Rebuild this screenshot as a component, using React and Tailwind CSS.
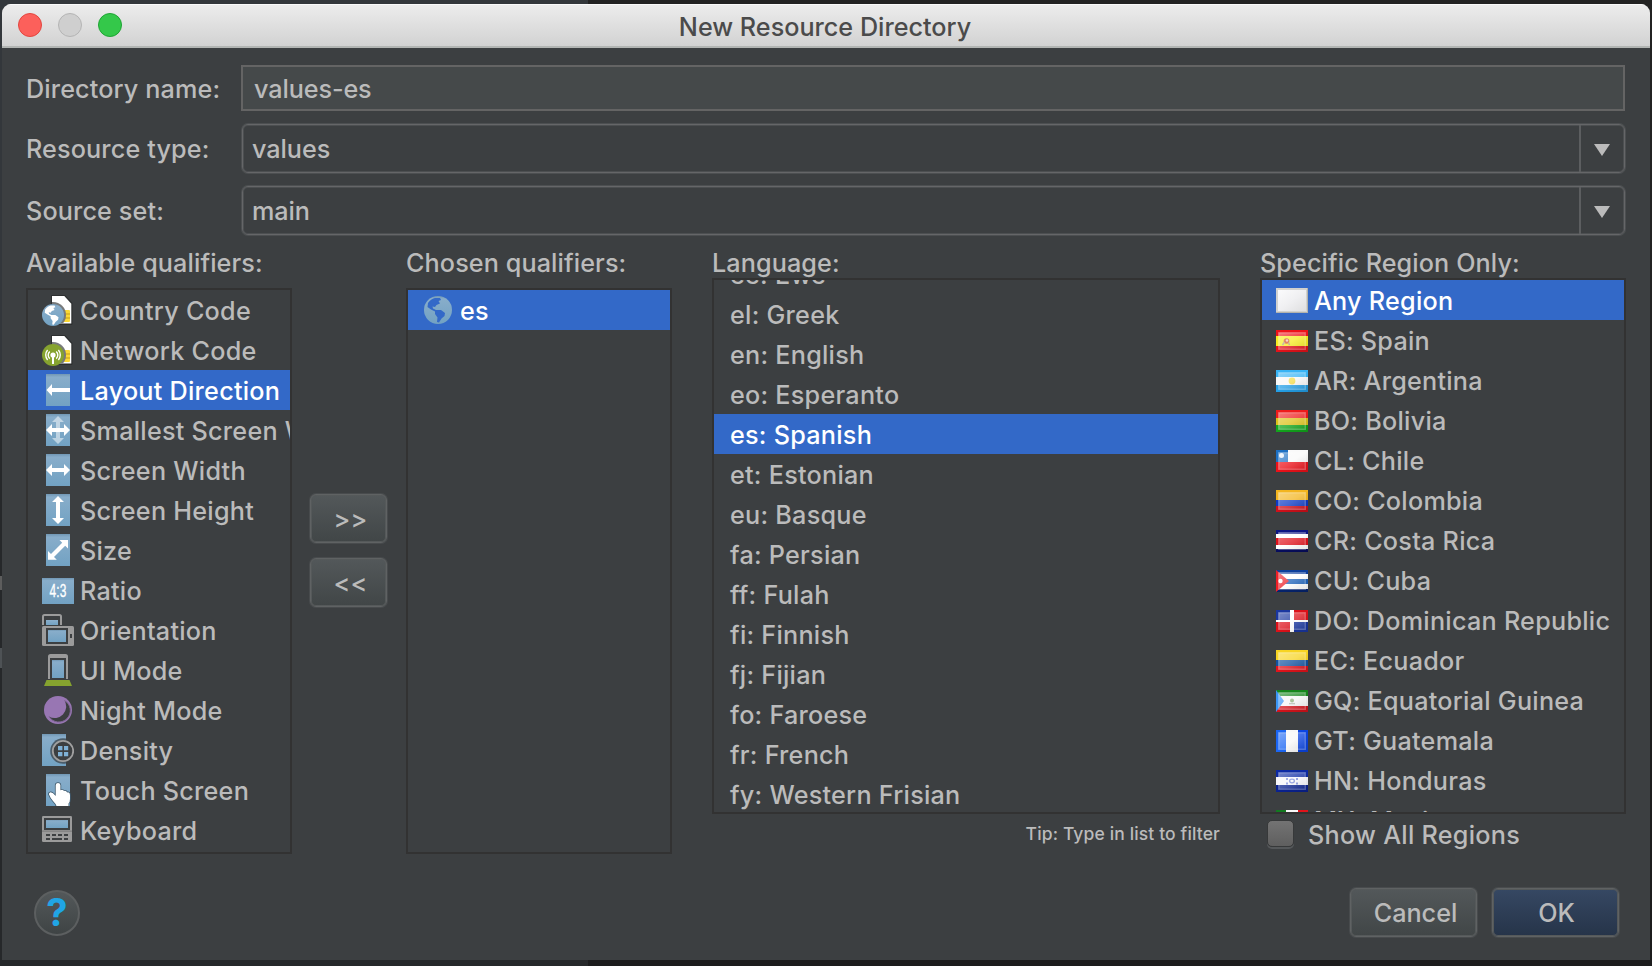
import React from "react";

const BLUE = "url(#screenBlue)";

function Globe({ cx, cy, r, land }) {
  return (
    <g transform={`translate(${cx - r} ${cy - r}) scale(${r / 14})`}>
      <circle cx="14" cy="14" r="14" fill={BLUE} />
      <path
        fill={land}
        d="M4 7 C6 4 9 2.5 11 2 L16 2 L17 4 L14.5 5 L16 7.5 L12.5 9 L11 11 L8.5 10.5 L9 12.5 L12 14 L17 14 L21 17 L20.5 20 L17.5 22.5 L15 26.5 L13 26 L13.5 21.5 L11 18 L11 15.5 L7 13.5 L3.5 11 Z"
      />
    </g>
  );
}

function SimCard() {
  return (
    <>
      <path d="M10 2 H22.5 L29.5 9.5 V30 H10 Z" fill="#fff" stroke="#2d2f30" strokeWidth="2" strokeLinejoin="round" />
      <path d="M10 2 H22.3 L29.3 9.7 V29.5 H10 Z" fill="#fff" />
      <rect x="18" y="16" width="10" height="12" rx="1" fill="#fbd834" />
      <path d="M22 20 H28 M22 24 H28" stroke="#c39d1e" strokeWidth="1" />
      <circle cx="11" cy="21" r="13" fill="#77797a" clipPath="url(#cardClip)" />
    </>
  );
}

const Screen = () => <rect x="4" width="24" height="32" fill={BLUE} />;

const HArrow = () => (
  <path fill="#fff" d="M4 16 L10 10 V14 H22 V10 L28 16 L22 22 V18 H10 V22 Z" />
);

const VArrow = ({ opacity = 1 }) => (
  <path fill="#fff" fillOpacity={opacity} d="M16 2 L22 8 H18 V24 H22 L16 30 L10 24 H14 V8 H10 Z" />
);

const icons = {
  country: (
    <>
      <SimCard />
      <Globe cx={11} cy={21} r={11} land="#fff" />
    </>
  ),
  network: (
    <>
      <SimCard />
      <circle cx="11" cy="21" r="11" fill="#86a32f" />
      <circle cx="11" cy="21" r="2.6" fill="#fff" />
      <path d="M11 21 V30" stroke="#fff" strokeWidth="2" />
      <path
        d="M7.8 24.6 A4.8 4.8 0 0 1 7.8 17.4 M14.2 24.6 A4.8 4.8 0 0 0 14.2 17.4 M5.6 26 A7.6 7.6 0 0 1 5.6 16 M16.4 26 A7.6 7.6 0 0 0 16.4 16"
        fill="none"
        stroke="#fff"
        strokeWidth="1.4"
      />
    </>
  ),
  direction: (
    <>
      <Screen />
      <path fill="#fff" d="M4.5 16 L10 10 V14 H28 V18 H10 V22 Z" />
    </>
  ),
  smallest: (
    <>
      <Screen />
      <VArrow opacity={0.5} />
      <HArrow />
    </>
  ),
  width: (
    <>
      <Screen />
      <HArrow />
    </>
  ),
  height: (
    <>
      <Screen />
      <VArrow />
    </>
  ),
  size: (
    <>
      <Screen />
      <path
        fill="#fff"
        d="M26 6 V14.5 L23.2 11.7 L12 22.9 L14.8 25.7 H6 V17 L9 19.9 L20.2 8.7 L17.5 6 Z"
      />
    </>
  ),
  ratio: (
    <>
      <rect y="4" width="32" height="26" fill={BLUE} />
      <text
        x="16"
        y="23.4"
        textAnchor="middle"
        fill="#fff"
        fontSize="18.5"
        fontWeight="400"
        fontFamily="Liberation Sans, sans-serif"
        textLength="17"
        lengthAdjust="spacingAndGlyphs"
        stroke="#fff"
        strokeWidth="0.4"
      >
        4:3
      </text>
    </>
  ),
  orientation: (
    <>
      <path d="M1 11 V2.5 Q1 1 2.5 1 H17.5 Q19 1 19 2.5 V11" fill="none" stroke="#9b9b9b" strokeWidth="2" />
      <rect x="4" y="6" width="12" height="5" fill={BLUE} />
      <rect y="12" width="32" height="20" rx="1.5" fill="#9b9b9b" />
      <rect x="4" y="14" width="22" height="16" fill="#3c3f41" />
      <rect x="6" y="16" width="18" height="12" fill={BLUE} />
      <rect x="28" y="20" width="2" height="4" fill="#3c3f41" />
    </>
  ),
  uimode: (
    <>
      <path d="M7 25 V2.5 Q7 1 8.5 1 H23.5 Q25 1 25 2.5 V25" fill="none" stroke="#9b9b9b" strokeWidth="2" />
      <path d="M8 3 H24" stroke="#9b9b9b" strokeWidth="2" />
      <rect x="10" y="6" width="12" height="18" fill={BLUE} />
      <path d="M4.5 26 H27.5 L30 32 H2 Z" fill="#86a32f" />
    </>
  ),
  night: (
    <>
      <circle cx="16" cy="16" r="14" fill="#9876b3" />
      <path d="M22.5 6.5 A11.5 11.5 0 1 1 7 22.5 A11.5 11.5 0 0 0 22.5 6.5 Z" fill="#3c3f41" />
      <path d="M22.5 6.5 A11.5 11.5 0 1 1 7 22.5" fill="none" stroke="#7d6492" strokeWidth="1" />
    </>
  ),
  density: (
    <>
      <rect width="24" height="32" fill={BLUE} />
      <circle cx="21" cy="17" r="12.8" fill="#4b5c69" clipPath="url(#densityClip)" />
      <circle cx="21" cy="17" r="10.2" fill="#3c3f41" stroke="#a0a0a0" strokeWidth="1.8" />
      <path d="M16 12 h4.4 v4.2 h-4.4 Z M22 12 h4.2 v4.2 h-4.2 Z M16 18 h4.4 v4.2 h-4.4 Z M22 18 h4.2 v4.2 h-4.2 Z" fill="#7fb1d6" />
    </>
  ),
  touch: (
    <>
      <Screen />
      <path
        d="M13.7 20.5 V11 Q13.9 9 16 9 Q18.2 9 18.4 11 V16.2 Q20.5 15 22 17 Q24 16.2 25.2 18.4 Q28 17.8 28 21 V25 Q28 28 26.5 29.5 V32 H14.5 Q13.5 29.5 11 27 Q8 23.5 7 20.6 Q6.6 18.6 8.6 18.2 Q11 18.4 13.7 22 Z"
        fill="#fff"
        stroke="#3f5a6e"
        strokeWidth="1.6"
        paintOrder="stroke"
      />
    </>
  ),
  keyboard: (
    <>
      <rect y="2" width="30" height="26" rx="1.2" fill="#9b9b9b" />
      <rect x="2" y="4" width="26" height="10.4" fill="#3c3f41" />
      <rect x="4" y="6" width="22" height="8" fill={BLUE} />
      <rect x="2" y="14" width="26" height="2" fill="#3c3f41" />
      <path d="M0 17.2 H30" stroke="#858585" strokeWidth="1.6" />
      <path
        d="M4 21 H8 M10 21 H14 M16 21 H20 M22 21 H26 M4 25 H8 M10 25 H20 M22 25 H26"
        stroke="#3c3f41"
        strokeWidth="2"
      />
    </>
  ),
  globe: <Globe cx={16} cy={16} r={14} land="#3369c8" />,
};

function Icon({ name }) {
  return (
    <svg viewBox="0 0 32 32" className="size-8 shrink-0">
      {icons[name]}
    </svg>
  );
}

const stripes = (...bands) => bands.map(([y, h, fill]) => <rect key={y} y={y} width="32" height={h} fill={fill} />);

const flags = {
  ES: (
    <>
      {stripes([0, 6, "#ee1219"], [6, 10, "#f7ee22"], [16, 6, "#e4121a"])}
      <circle cx="10.5" cy="11" r="2.8" fill="#d9562f" />
      <circle cx="11" cy="10.5" r="1.2" fill="#f2c9b8" />
      <path d="M6.5 15 L8.5 12 M13.5 15 L12.5 12.5" stroke="#b5a08a" strokeWidth="1.5" />
    </>
  ),
  AR: (
    <>
      {stripes([0, 7, "#38b4f5"], [7, 8, "#f7f7f7"], [15, 7, "#249fe6"])}
      <circle cx="16" cy="11" r="3.4" fill="#f3dc4b" />
    </>
  ),
  BO: stripes([0, 8, "#ee1b1b"], [8, 7, "#dcc21a"], [15, 7, "#12a51c"]),
  CL: (
    <>
      {stripes([0, 12, "#fafafa"], [12, 10, "#ec1119"])}
      <rect width="12" height="12" fill="#1c70c4" />
      <circle cx="5.5" cy="5.5" r="2.5" fill="#e6f0fa" />
    </>
  ),
  CO: stripes([0, 10, "#f3b51f"], [10, 6, "#0d3ac4"], [16, 6, "#d0101a"]),
  CR: stripes([0, 4, "#0b1583"], [4, 4, "#ffffff"], [8, 7, "#e0111b"], [15, 4, "#ffffff"], [19, 3, "#070d5e"]),
  CU: (
    <>
      {stripes([0, 4, "#0d3f9c"], [4, 5, "#ffffff"], [9, 5, "#1d62ba"], [14, 5, "#ffffff"], [19, 3, "#06246e"])}
      <path d="M0 0 L13 11 L0 22 Z" fill="#ee2028" />
      <circle cx="4.5" cy="11" r="2.2" fill="#fff" />
    </>
  ),
  DO: (
    <>
      <rect width="32" height="22" fill="#fff" />
      <path d="M0 0 H14 V10 H0 Z M18 12 H32 V22 H18 Z" fill="#1a37a0" />
      <path d="M18 0 H32 V10 H18 Z M0 12 H14 V22 H0 Z" fill="#dd1119" />
    </>
  ),
  EC: stripes([0, 10, "#f7d422"], [10, 6, "#12529f"], [16, 6, "#e2131b"]),
  GQ: (
    <>
      {stripes([0, 6, "#15861b"], [6, 10, "#f6f6f6"], [16, 6, "#d4131b"])}
      <path d="M0 0 L8 11 L0 22 Z" fill="#3a95f5" />
      <circle cx="16" cy="10.4" r="2" fill="#8fb07c" />
      <path d="M13 13.6 H19" stroke="#b9bfb4" strokeWidth="1.4" />
    </>
  ),
  GT: (
    <>
      <rect width="32" height="22" fill="#f8f8f8" />
      <rect width="10" height="22" fill="#1b66f4" />
      <rect x="22" width="10" height="22" fill="#0b45e2" />
    </>
  ),
  HN: (
    <>
      {stripes([0, 7, "#0c2aa4"], [7, 8, "#f6f6fb"], [15, 7, "#0a2290"])}
      <path d="M10 8 h2 v2 h-2 Z M20 8 h2 v2 h-2 Z M10 12.5 h2 v2 h-2 Z M20 12.5 h2 v2 h-2 Z" fill="#7f8fdb" />
      <ellipse cx="16" cy="11" rx="2.4" ry="1.8" fill="none" stroke="#7f8fdb" strokeWidth="1.3" />
    </>
  ),
  MX: (
    <>
      <rect width="32" height="22" fill="#f8f8f8" />
      <rect width="10" height="22" fill="#127a20" />
      <rect x="22" width="10" height="22" fill="#e0131b" />
    </>
  ),
};

function Flag({ code }) {
  if (code === "ANY") {
    return (
      <svg viewBox="0 0 32 25" className="h-[25px] w-8 shrink-0">
        <rect width="32" height="25" fill="#b3b3ad" />
        <rect width="31" height="24" fill="#d2d2cf" />
        <rect x="2" y="2" width="28" height="21" fill="url(#anyFill)" />
      </svg>
    );
  }
  return (
    <svg viewBox="0 0 32 22" className="mt-0.5 h-[22px] w-8 shrink-0">
      {flags[code]}
      <rect width="32" height="22" fill="url(#flagShade)" />
      <rect x="2.7" y="2.7" width="26.6" height="16.6" fill="url(#flagGloss)" stroke="#fff" strokeOpacity="0.26" strokeWidth="1.4" />
    </svg>
  );
}

function Defs() {
  return (
    <svg className="absolute size-0">
      <defs>
        <linearGradient id="screenBlue" x1="0" y1="0" x2="0" y2="1">
          <stop offset="0" stopColor="#7197b4" />
          <stop offset="0.1" stopColor="#88adca" />
          <stop offset="1" stopColor="#72a2c3" />
        </linearGradient>
        <linearGradient id="anyFill" x1="0" y1="0" x2="1" y2="1">
          <stop offset="0" stopColor="#fbfbfc" />
          <stop offset="0.5" stopColor="#f0f0f2" />
          <stop offset="1" stopColor="#dfdfe0" />
        </linearGradient>
        <linearGradient id="flagGloss" x1="0" y1="0" x2="1" y2="1">
          <stop offset="0" stopColor="#fff" stopOpacity="0.42" />
          <stop offset="1" stopColor="#fff" stopOpacity="0.06" />
        </linearGradient>
        <linearGradient id="flagShade" x1="0" y1="0" x2="1" y2="1">
          <stop offset="0.5" stopColor="#000" stopOpacity="0" />
          <stop offset="1" stopColor="#000" stopOpacity="0.14" />
        </linearGradient>
        <clipPath id="densityClip">
          <rect width="24" height="32" />
        </clipPath>
        <clipPath id="cardClip">
          <path d="M10 2 H22.3 L29.3 9.7 V29.5 H10 Z" />
        </clipPath>
      </defs>
    </svg>
  );
}

const qualifiers = [
  ["country", "Country Code"],
  ["network", "Network Code"],
  ["direction", "Layout Direction"],
  ["smallest", "Smallest Screen Width"],
  ["width", "Screen Width"],
  ["height", "Screen Height"],
  ["size", "Size"],
  ["ratio", "Ratio"],
  ["orientation", "Orientation"],
  ["uimode", "UI Mode"],
  ["night", "Night Mode"],
  ["density", "Density"],
  ["touch", "Touch Screen"],
  ["keyboard", "Keyboard"],
];

const languages = [
  "ee: Ewe",
  "el: Greek",
  "en: English",
  "eo: Esperanto",
  "es: Spanish",
  "et: Estonian",
  "eu: Basque",
  "fa: Persian",
  "ff: Fulah",
  "fi: Finnish",
  "fj: Fijian",
  "fo: Faroese",
  "fr: French",
  "fy: Western Frisian",
];

const regions = [
  ["ANY", "Any Region"],
  ["ES", "ES: Spain"],
  ["AR", "AR: Argentina"],
  ["BO", "BO: Bolivia"],
  ["CL", "CL: Chile"],
  ["CO", "CO: Colombia"],
  ["CR", "CR: Costa Rica"],
  ["CU", "CU: Cuba"],
  ["DO", "DO: Dominican Republic"],
  ["EC", "EC: Ecuador"],
  ["GQ", "GQ: Equatorial Guinea"],
  ["GT", "GT: Guatemala"],
  ["HN", "HN: Honduras"],
  ["MX", "MX: Mexico"],
];

function Row({ selected, className = "", icon, children }) {
  return (
    <li
      className={`flex h-10 shrink-0 items-center gap-1.5 whitespace-nowrap ${
        selected ? "bg-[#3369c8] text-white" : ""
      } ${className}`}
    >
      {icon}
      <span className="pt-0.5 leading-[38px]">{children}</span>
    </li>
  );
}

function Combo({ value }) {
  return (
    <div className="ml-px flex h-[49px] w-[1383px] rounded-[6px] border border-[#656668] shadow-[0_0_0_1px_#4c4f51,inset_0_0_0_1px_#4c4f51]">
      <div className="flex-1 pt-px pl-[9px] leading-[46px] tracking-[-0.05px]">{value}</div>
      <div className="flex w-[45px] items-center justify-center border-l-2 border-[#5c5e60]">
        <svg viewBox="0 0 16 12" className="mt-0.5 mr-px h-3 w-4">
          <path d="M0 0 H16 L8 12 Z" fill="#bbbbbb" />
        </svg>
      </div>
    </div>
  );
}

const softButton =
  "flex items-center justify-center rounded-[6px] border border-[#5f6263] pt-0.5 shadow-[0_0_0_1px_#484b4d,inset_0_0_0_1px_#55595a]";

export default function App() {
  return (
    <div className="relative h-[966px] w-[1652px] overflow-hidden bg-[#1c1c1d] bg-[linear-gradient(to_right,#33373b_588px,#232323_588px)] bg-[length:100%_400px] bg-no-repeat pt-1 pl-0.5 font-['Inter','Liberation_Sans',sans-serif] text-[25.2px] font-[450] text-[#bbbbbb]">
      <Defs />
      <div className="absolute bottom-0 left-0 h-[566px] w-[588px] bg-[#26282a]" />
      <div className="absolute top-[576px] left-0 h-3.5 w-0.5 bg-[#5d5d5d]" />
      <div className="absolute top-[648px] left-0 h-5 w-0.5 bg-[#4e5255]" />
      <div className="relative flex h-[956px] w-[1648px] flex-col overflow-hidden rounded-t-[9px] bg-[#3c3f41]">
        <header className="flex h-11 shrink-0 items-center border-b-2 border-[#b2b5b3] bg-linear-to-b from-[#ededed] to-[#d2d2d2] shadow-[inset_0_1px_0_#fafafa]">
          <div className="flex w-[140px] gap-4 pl-4">
            <span className="size-6 rounded-full border border-[#e2463f] bg-[#fc605b]" />
            <span className="size-6 rounded-full border border-[#b4b4b4] bg-[#cfcfcf]" />
            <span className="size-6 rounded-full border border-[#1fa434] bg-[#34c84a]" />
          </div>
          <h1 className="flex-1 pt-[5px] pr-[142px] text-center text-[#4b4b4b]">New Resource Directory</h1>
        </header>

        <section className="flex flex-col pt-[17px] pl-6 tracking-[0.13px]">
          <div className="flex h-[46px] items-center">
            <label className="w-[215px] pt-[3px]">Directory name:</label>
            <div className="h-[46px] w-[1384px] border-2 border-[#646464] bg-[#45494a] pt-px pl-[11px] leading-[42px] tracking-[-0.1px]">
              values-es
            </div>
          </div>
          <div className="mt-[13px] flex h-[49px] items-center">
            <label className="w-[215px] pt-0.5">Resource type:</label>
            <Combo value="values" />
          </div>
          <div className="mt-[13px] flex h-[49px] items-center">
            <label className="w-[215px] pt-0.5">Source set:</label>
            <Combo value="main" />
          </div>
        </section>

        <section className="mt-[13px] flex pl-6 tracking-[0.1px]">
          <div className="w-[266px]">
            <h2 className="h-10 leading-[30px]">Available qualifiers:</h2>
            <ul className="h-[566px] overflow-hidden border-2 border-[#323232] tracking-[0.25px]">
              {qualifiers.map(([icon, label]) => (
                <Row key={icon} selected={icon === "direction"} className="pl-3.5" icon={<Icon name={icon} />}>
                  {label}
                </Row>
              ))}
            </ul>
          </div>

          <div className="flex w-[114px] flex-col gap-[15px] pt-[246px] pl-[18px]">
            <button className={`${softButton} h-[49px] w-[77px] bg-linear-to-b from-[#53585a] to-[#414647] pl-1`}>&gt;&gt;</button>
            <button className={`${softButton} h-[49px] w-[77px] bg-linear-to-b from-[#53585a] to-[#414647] pl-1`}>&lt;&lt;</button>
          </div>

          <div className="w-[266px]">
            <h2 className="h-10 leading-[30px]">Chosen qualifiers:</h2>
            <ul className="h-[566px] overflow-hidden border-2 border-[#323232]">
              <Row selected className="pl-3.5" icon={<Icon name="globe" />}>
                es
              </Row>
            </ul>
          </div>

          <div className="ml-10 w-[508px]">
            <h2 className="h-[30px] leading-[30px]">Language:</h2>
            <ul className="flex h-[536px] flex-col overflow-hidden border-2 border-[#323232] tracking-[0.25px]">
              {languages.map((name, i) => (
                <Row key={name} selected={name === "es: Spanish"} className={i === 0 ? "-mt-[26px] pl-4" : "pl-4"}>
                  {name}
                </Row>
              ))}
            </ul>
            <p className="pt-[7px] text-right text-[17.5px] leading-[26px] tracking-[0.13px]">Tip: Type in list to filter</p>
          </div>

          <div className="ml-10 w-[366px]">
            <h2 className="h-[30px] leading-[30px]">Specific Region Only:</h2>
            <ul className="h-[536px] overflow-hidden border-2 border-[#323232] tracking-[0.25px]">
              {regions.map(([code, label]) => (
                <Row key={code} selected={code === "ANY"} className="pl-3.5" icon={<Flag code={code} />}>
                  {label}
                </Row>
              ))}
            </ul>
            <label className="flex h-10 items-center gap-3.5 pl-[7px] tracking-[0.27px]">
              <span className="mb-0.5 size-[27px] rounded-[5px] border border-[#37393a] bg-linear-to-b from-[#737373] to-[#5f5f5f] shadow-[0_2px_0_#55585a]" />
              <span className="pt-[3px]">Show All Regions</span>
            </label>
          </div>
        </section>

        <footer className="mt-[34px] flex items-center justify-between pr-[31px] pl-8">
          <button className="flex size-[46px] items-center justify-center rounded-full border-2 border-[#5c5f60] bg-linear-to-b from-[#53585a] to-[#3f4445] text-[38px] font-bold text-[#20a5e5]">
            ?
          </button>
          <div className="flex gap-[15px]">
            <button className={`${softButton} h-[49px] w-[127px] bg-linear-to-b from-[#53585a] to-[#414647] pl-1`}>Cancel</button>
            <button className={`${softButton} h-[49px] w-[127px] bg-linear-to-b from-[#364863] to-[#263449] pl-0.5`}>OK</button>
          </div>
        </footer>
      </div>
    </div>
  );
}
